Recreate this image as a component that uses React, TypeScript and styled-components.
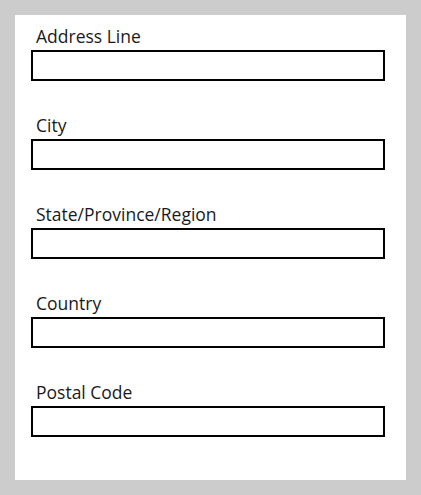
import React from "react";
import styled, { createGlobalStyle } from "styled-components";

const Global = createGlobalStyle`
  html, body { margin: 0; padding: 0; background: #cccccc; }
  body { font-family: "Open Sans", "Liberation Sans", sans-serif; }
`;

const Page = styled.div`
  padding: 15px;
  width: 391px;
`;

const Panel = styled.form`
  background: #ffffff;
  width: 391px;
  height: 465px;
  box-sizing: border-box;
  padding: 10px 0 0 16px;
  display: flex;
  flex-direction: column;
  gap: 33px;
`;

const Field = styled.div`
  display: flex;
  flex-direction: column;
  gap: 2px;
`;

const Label = styled.label`
  display: block;
  padding-left: 5px;
  font-size: 17.5px;
  line-height: 23px;
  color: #1a1a1a;
`;

const Input = styled.input`
  box-sizing: border-box;
  width: 354px;
  height: 31px;
  border: 2px solid #000000;
  background: #ffffff;
  margin: 0;
  padding: 0 6px;
  font-size: 16px;
  outline: none;
`;

const fields = ["Address Line", "City", "State/Province/Region", "Country", "Postal Code"];

export default function App() {
  return (
    <>
      <Global />
      <Page>
        <Panel>
          {fields.map((f) => (
            <Field key={f}>
              <Label>{f}</Label>
              <Input type="text" />
            </Field>
          ))}
        </Panel>
      </Page>
    </>
  );
}
